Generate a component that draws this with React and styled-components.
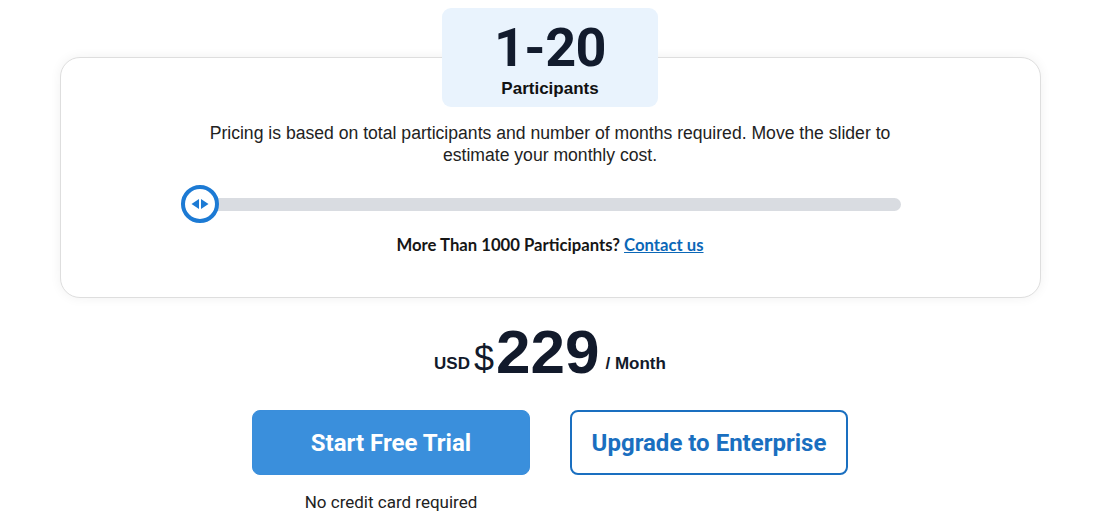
import React, { useState } from "react";
import styled, { createGlobalStyle } from "styled-components";

const GlobalStyle = createGlobalStyle`
  body {
    margin: 0;
    background: #ffffff;
    font-family: "Liberation Sans", Arial, sans-serif;
  }
`;

const App = () => {
  const [value] = useState(0);

  return (
    <>
      <GlobalStyle />
      <SPage>
        <SBadge>
          <SRange>1-20</SRange>
          <SBadgeLabel>Participants</SBadgeLabel>
        </SBadge>
        <SCard>
          <SInfo>
            Pricing is based on total participants and number of months required. Move the slider to
            estimate your monthly cost.
          </SInfo>
          <SSlider>
            <STrack />
            <SThumb style={{ left: `${value}%` }}>
              <svg width="20" height="12" viewBox="0 0 20 12">
                <polygon points="9,1 9,11 1.5,6" fill="#1c7ad4" />
                <polygon points="11,1 11,11 18.5,6" fill="#1c7ad4" />
              </svg>
            </SThumb>
          </SSlider>
          <SMore>
            More Than 1000 Participants? <SLink href="#">Contact us</SLink>
          </SMore>
        </SCard>
        <SPrice>
          <SCurrency>USD</SCurrency>
          <SDollar>$</SDollar>
          <SAmount>229</SAmount>
          <SPeriod>/ Month</SPeriod>
        </SPrice>
        <SActions>
          <SColumn>
            <SButton $primary>Start Free Trial</SButton>
            <SNote>No credit card required</SNote>
          </SColumn>
          <SColumn>
            <SButton>Upgrade to Enterprise</SButton>
          </SColumn>
        </SActions>
      </SPage>
    </>
  );
};

const SPage = styled.div`
  width: 1100px;
  display: flex;
  flex-direction: column;
  align-items: center;
  padding-top: 8px;
`;

const SBadge = styled.div`
  position: relative;
  z-index: 1;
  width: 216px;
  height: 99px;
  box-sizing: border-box;
  padding-top: 14px;
  background: #e9f3fd;
  border-radius: 9px;
  display: flex;
  flex-direction: column;
  align-items: center;
`;

const SRange = styled.div`
  font-family: Roboto, sans-serif;
  font-weight: 700;
  font-size: 54px;
  line-height: 52px;
  color: #121b2d;
  letter-spacing: -0.5px;
`;

const SBadgeLabel = styled.div`
  font-size: 17px;
  font-weight: 700;
  color: #111;
  margin-top: 5px;
`;

const SCard = styled.div`
  width: 981px;
  box-sizing: border-box;
  margin-top: -50px;
  padding: 64px 0 42px;
  border: 1px solid #dedede;
  border-radius: 20px;
  background: #fff;
  box-shadow: 0 0 12px rgba(0, 0, 0, 0.06);
  display: flex;
  flex-direction: column;
  align-items: center;
`;

const SInfo = styled.p`
  margin: 0;
  width: 720px;
  text-align: center;
  font-size: 17.6px;
  line-height: 22px;
  color: #222;
`;

const SSlider = styled.div`
  position: relative;
  align-self: flex-start;
  margin: 19px 0 0 120px;
  width: 720px;
  height: 38px;
  display: flex;
  align-items: center;
`;

const STrack = styled.div`
  width: 100%;
  height: 13px;
  border-radius: 7px;
  background: #d9dce1;
`;

const SThumb = styled.div`
  position: absolute;
  top: 0;
  width: 38px;
  height: 38px;
  box-sizing: border-box;
  border: 4px solid #1c7ad4;
  border-radius: 50%;
  background: #fff;
  display: flex;
  align-items: center;
  justify-content: center;
`;

const SMore = styled.div`
  margin-top: 12px;
  font-family: Lato, "Open Sans", sans-serif;
  font-weight: 700;
  font-size: 16.7px;
  line-height: 20px;
  color: #161616;
`;

const SLink = styled.a`
  color: #0b67b7;
  text-decoration: underline;
`;

const SPrice = styled.div`
  margin-top: 23px;
  display: flex;
  align-items: flex-end;
  color: #121a2b;
`;

const SCurrency = styled.span`
  font-size: 17px;
  font-weight: 700;
  line-height: 1;
  margin: 0 4px 11px 0;
`;

const SDollar = styled.span`
  font-size: 36px;
  line-height: 1;
  margin-bottom: 6px;
`;

const SAmount = styled.span`
  font-weight: 700;
  font-size: 62px;
  line-height: 1;
  margin: 0 6px 0 2px;
`;

const SPeriod = styled.span`
  font-size: 17px;
  font-weight: 700;
  line-height: 1;
  margin-bottom: 11px;
`;

const SActions = styled.div`
  margin-top: 27px;
  display: flex;
  gap: 40px;
`;

const SColumn = styled.div`
  display: flex;
  flex-direction: column;
  align-items: center;
`;

const SButton = styled.button`
  width: 278px;
  height: 65px;
  border-radius: 8px;
  font-family: Roboto, sans-serif;
  font-weight: 700;
  font-size: 24px;
  cursor: pointer;
  border: ${(p) => (p.$primary ? "1px solid #3a8edb" : "2px solid #1a6fc0")};
  background: ${(p) => (p.$primary ? "#3a8fdc" : "#fff")};
  color: ${(p) => (p.$primary ? "#fff" : "#1a6fc0")};
`;

const SNote = styled.div`
  margin-top: 17px;
  font-family: Roboto, sans-serif;
  font-size: 17px;
  color: #222;
`;

export default App;
